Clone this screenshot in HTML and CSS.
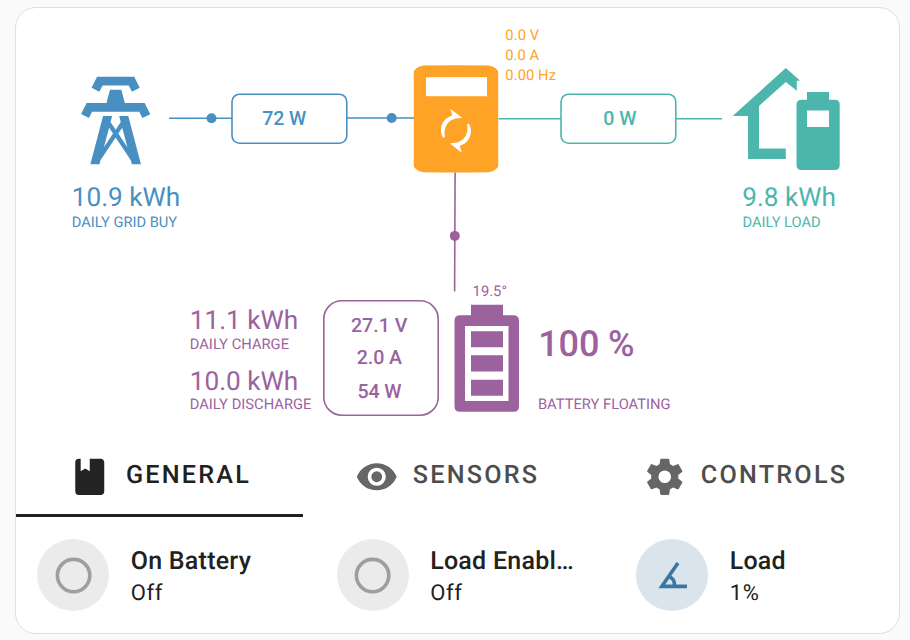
FILE: index.html
```html
<!DOCTYPE html>
<html lang="en">
<head>
<meta charset="utf-8">
<title>Power flow</title>
<link rel="stylesheet" href="styles.css">
</head>
<body>
<main class="card">
  <svg class="flow" viewBox="16 8 884 429" width="884" height="429">
    <g class="grid">
      <path class="fill" transform="translate(63.1 67.9) scale(4.38)" d="M8.28,5.45L6.5,4.55L7.76,2H16.23L17.5,4.55L15.72,5.44L15,4H9L8.28,5.45M18.62,8H14.09L13.3,5H10.7L9.91,8H5.38L4.1,10.55L5.89,11.44L6.62,10H17.38L18.1,11.45L19.89,10.56L18.62,8M17.77,22H15.7L15.46,21.1L12,15.9L8.53,21.1L8.3,22H6.23L9.12,11H11.19L10.83,12.35L12,14.1L13.16,12.35L12.81,11H14.88L17.77,22M11.4,15L10.5,13.65L9.32,18.13L11.4,15M14.68,18.12L13.5,13.64L12.6,15L14.68,18.12Z"/>
      <path class="line" d="M169 118.2H232M347 118H414"/>
      <circle class="fill" cx="211.5" cy="118.2" r="5"/>
      <circle class="fill" cx="391.7" cy="118" r="5"/>
      <rect class="line" x="232" y="94.2" width="114.8" height="49" rx="7.5"/>
      <text class="power" x="262.3" y="125.3" textLength="44">72 W</text>
      <text class="energy" x="71.7" y="206" textLength="108.5">10.9 kWh</text>
      <text class="label" x="71.7" y="227" textLength="105.5">DAILY GRID BUY</text>
    </g>
    <g class="inverter">
      <path class="fill" d="M424 65.4Q456 64.9 488 65.4C493 65.6 498.2 69.5 498.2 72V166C498.2 168 493 172 488 172.2Q456 172.7 424 172.2C419 172 413.8 168 413.8 166V72C413.8 69.5 419 65.6 424 65.4Z"/>
      <rect class="blank" x="426" y="77.2" width="61" height="19"/>
      <path id="arrow" class="blank" d="M443 137.6C438.8 130 441 119 452.3 115.5L450.2 108.7L462.2 117.8L455 118.8C447.5 121 443.6 127 444.8 136.4Q444.2 138 443 137.6Z"/>
      <use href="#arrow" transform="rotate(180 456 130.7)"/>
      <text class="label" x="505.3" y="40" textLength="33.8">0.0 V</text>
      <text class="label" x="505.3" y="60" textLength="33.8">0.0 A</text>
      <text class="label" x="505.3" y="80" textLength="50.7">0.00 Hz</text>
    </g>
    <g class="load">
      <path class="line" d="M498.5 118.7H561M676 118.7H722"/>
      <rect class="line" x="561" y="94.2" width="114.8" height="49" rx="7.5"/>
      <text class="power" x="603.2" y="125.3" textLength="33.3">0 W</text>
      <path class="fill" d="M785.8 68L800.2 80.8H796.8V90.7L785.8 82L759 106V148.4H785.8V159H748V116H732.7Z"/>
      <path class="fill" fill-rule="evenodd" d="M807 92H829V99.7H834.7Q839.7 99.7 839.7 104.7V165Q839.7 170 834.7 170H801.5Q796.5 170 796.5 165V104.7Q796.5 99.7 801.5 99.7H807ZM807 110.4V127H829V110.4Z"/>
      <text class="energy" x="742.3" y="206" textLength="93.6">9.8 kWh</text>
      <text class="label" x="742.5" y="227" textLength="78.2">DAILY LOAD</text>
    </g>
    <g class="battery">
      <path class="line" d="M455.1 172.5L454.6 291.5"/>
      <circle class="fill" cx="454.8" cy="235.9" r="5"/>
      <rect class="line" x="323.8" y="300.8" width="114.4" height="114.4" rx="18"/>
      <text class="power" x="351" y="332.2" textLength="56.3">27.1 V</text>
      <text class="power" x="356.7" y="364.3" textLength="45.3">2.0 A</text>
      <text class="power" x="357.5" y="398.2" textLength="44">54 W</text>
      <path class="fill" fill-rule="evenodd" d="M471 304.7H503V315.3H513.5Q519 315.3 519 320.8V406.2Q519 411.7 513.5 411.7H460Q454.5 411.7 454.5 406.2V320.8Q454.5 315.3 460 315.3H471ZM465 326V401H508.5V326Z"/>
      <path class="fill" d="M471 331.2H503V347.3H471ZM471 355.3H503V371.6H471ZM471 379.7H503V395.7H471Z"/>
      <text class="label" x="472.6" y="296" textLength="34.3">19.5°</text>
      <text class="energy" x="189.7" y="329.3" textLength="108.5">11.1 kWh</text>
      <text class="label" x="189.7" y="349" textLength="99.3">DAILY CHARGE</text>
      <text class="energy" x="189.7" y="390" textLength="108.5">10.0 kWh</text>
      <text class="label" x="189.7" y="409" textLength="121.7">DAILY DISCHARGE</text>
      <text class="percent" x="538.3" y="356.2" textLength="96.2">100 %</text>
      <text class="label" x="537.9" y="409" textLength="132.7">BATTERY FLOATING</text>
    </g>
  </svg>

  <nav class="tabs">
    <div class="tab active">
      <svg class="icon" viewBox="0 0 24 24"><path d="M18 22A2 2 0 0 0 20 20V4C20 2.9 19.1 2 18 2H12V9L9.5 7.5L7 9V2H6A2 2 0 0 0 4 4V20A2 2 0 0 0 6 22H18Z"/></svg>
      <span class="tab-text">GENERAL</span>
    </div>
    <div class="tab">
      <svg class="icon" viewBox="0 0 24 24"><path d="M12,9A3,3 0 0,0 9,12A3,3 0 0,0 12,15A3,3 0 0,0 15,12A3,3 0 0,0 12,9M12,17A5,5 0 0,1 7,12A5,5 0 0,1 12,7A5,5 0 0,1 17,12A5,5 0 0,1 12,17M12,4.5C7,4.5 2.73,7.61 1,12C2.73,16.39 7,19.5 12,19.5C17,19.5 21.27,16.39 23,12C21.27,7.61 17,4.5 12,4.5Z"/></svg>
      <span class="tab-text">SENSORS</span>
    </div>
    <div class="tab last">
      <svg class="icon" viewBox="0 0 24 24"><path d="M12,15.5A3.5,3.5 0 0,1 8.5,12A3.5,3.5 0 0,1 12,8.5A3.5,3.5 0 0,1 15.5,12A3.5,3.5 0 0,1 12,15.5M19.43,12.97C19.47,12.65 19.5,12.33 19.5,12C19.5,11.67 19.47,11.34 19.43,11L21.54,9.37C21.73,9.22 21.78,8.95 21.66,8.73L19.66,5.27C19.54,5.05 19.27,4.96 19.05,5.05L16.56,6.05C16.04,5.66 15.5,5.32 14.87,5.07L14.5,2.42C14.46,2.18 14.25,2 14,2H10C9.75,2 9.54,2.18 9.5,2.42L9.13,5.07C8.5,5.32 7.96,5.66 7.44,6.05L4.95,5.05C4.73,4.96 4.46,5.05 4.34,5.27L2.34,8.73C2.21,8.95 2.27,9.22 2.46,9.37L4.57,11C4.53,11.34 4.5,11.67 4.5,12C4.5,12.33 4.53,12.65 4.57,12.97L2.46,14.63C2.27,14.78 2.21,15.05 2.34,15.27L4.34,18.73C4.46,18.95 4.73,19.03 4.95,18.95L7.44,17.94C7.96,18.34 8.5,18.68 9.13,18.93L9.5,21.58C9.54,21.82 9.75,22 10,22H14C14.25,22 14.46,21.82 14.5,21.58L14.87,18.93C15.5,18.67 16.04,18.34 16.56,17.94L19.05,18.95C19.27,19.03 19.54,18.95 19.66,18.73L21.66,15.27C21.78,15.05 21.73,14.78 21.54,14.63L19.43,12.97Z"/></svg>
      <span class="tab-text">CONTROLS</span>
    </div>
  </nav>

  <section class="entities">
    <div class="entity">
      <div class="badge"><svg class="icon" viewBox="0 0 24 24"><circle class="ring" cx="12" cy="12" r="9"/></svg></div>
      <div class="info"><div class="name">On Battery</div><div class="state">Off</div></div>
    </div>
    <div class="entity">
      <div class="badge"><svg class="icon" viewBox="0 0 24 24"><circle class="ring" cx="12" cy="12" r="9"/></svg></div>
      <div class="info"><div class="name">Load Enabl…</div><div class="state">Off</div></div>
    </div>
    <div class="entity">
      <div class="badge blue"><svg class="icon" viewBox="0 0 24 24"><path d="M20,19H4.09L14.18,4.43L15.82,5.57L11.28,12.13C12.89,12.96 14,14.62 14,16.54C14,16.7 14,16.85 13.97,17H20V19M7.91,17H11.96C12,16.85 12,16.7 12,16.54C12,15.28 11.24,14.22 10.14,13.8L7.91,17Z"/></svg></div>
      <div class="info"><div class="name">Load</div><div class="state">1%</div></div>
    </div>
  </section>
</main>
</body>
</html>
```
FILE: styles.css
```css
* { box-sizing: border-box; }

body {
  margin: 0;
  padding: 7px 0 0 15px;
  height: 640px;
  overflow: hidden;
  background: #fafafa;
  font-family: Roboto, "Liberation Sans", sans-serif;
  color: #212121;
}

.card {
  width: 885px;
  height: 627px;
  border: 1px solid #e0e0e0;
  border-radius: 21px;
  background: #fff;
  overflow: hidden;
}

.flow { display: block; }
.grid { --tone: #488fc2; }
.inverter { --tone: #ffa326; }
.load { --tone: #4db6ac; }
.battery { --tone: #9b629e; }
.fill, .flow text { fill: var(--tone); }
.flow text { text-rendering: geometricPrecision; }
.line { fill: none; stroke: var(--tone); stroke-width: 1.6; }
.blank { fill: #fff; }
.energy { font-size: 26.2px; }
.label { font-size: 14.7px; }
.power { font-size: 19.6px; font-weight: 500; }
.percent { font-size: 36px; font-weight: 500; }

.tabs { display: flex; height: 80px; }
.tab {
  flex: 0 0 287px;
  display: flex;
  justify-content: center;
  gap: 14.5px;
  padding-top: 18.4px;
  border-bottom: 3px solid transparent;
  color: #4d4d4d;
}
.tab:nth-child(2) { padding-left: 1px; }
.tab.last { flex-basis: 310px; }
.tab.active { color: #212121; border-color: #212121; }
.icon { display: block; flex: none; width: 43.5px; height: 43.5px; fill: currentColor; }
.tab .icon { color: #666; }
.tab.active .icon { color: #242424; }
.tab-text {
  font-size: 25.2px;
  line-height: 41px;
  font-weight: 500;
  letter-spacing: 2.2px;
}

.entities {
  display: grid;
  grid-template-columns: 299.5px 299.5px 1fr;
  padding: 22px 0 0 21px;
}
.entity { display: flex; gap: 21.7px; }
.badge {
  display: grid;
  place-items: center;
  width: 72px;
  height: 72px;
  padding: .5px 0 0 1px;
  border-radius: 50%;
  background: #ebebeb;
  color: #9e9e9e;
}
.badge .icon { width: 43.2px; height: 43.2px; }
.badge.blue { background: #dae4ec; color: #3b76a3; }
.ring { fill: none; stroke: currentColor; stroke-width: 2; }
.name { font-size: 25px; line-height: 36px; font-weight: 500; letter-spacing: .25px; padding-top: 5px; }
.state { font-size: 22px; line-height: 28px; letter-spacing: .6px; }
.name, .state, .tab-text { text-rendering: geometricPrecision; }
```
